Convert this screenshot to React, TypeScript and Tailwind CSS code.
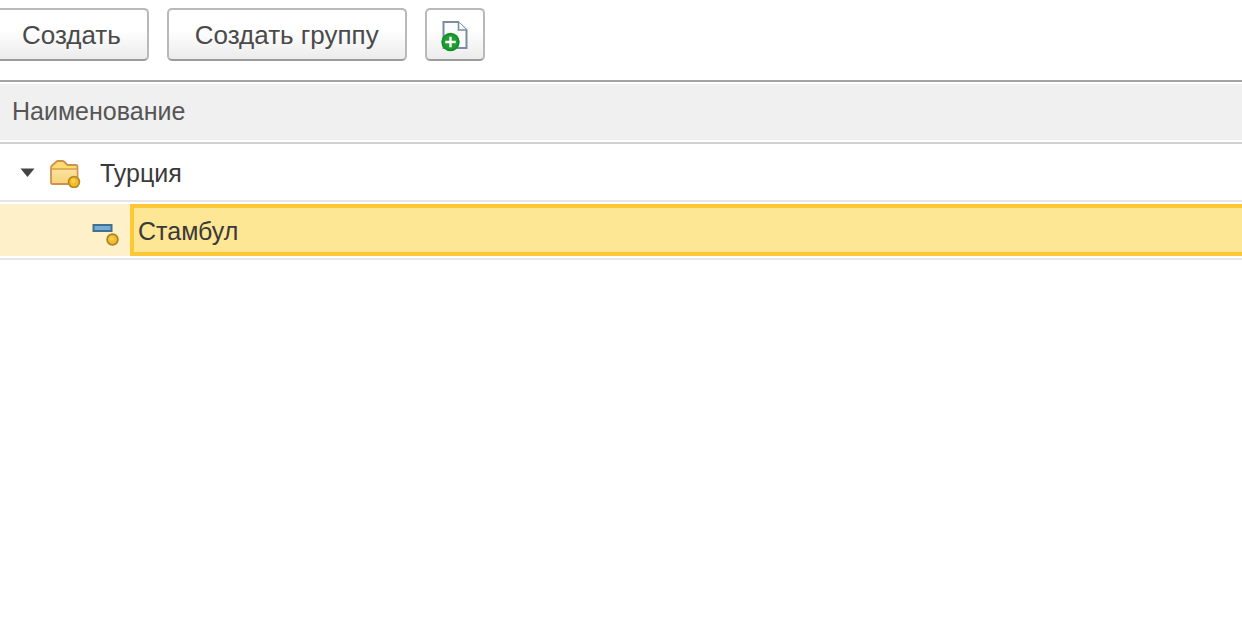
import type { ReactNode } from "react";

function DocumentAddIcon() {
  return (
    <svg width="32" height="34" viewBox="0 0 32 34" fill="none" aria-hidden="true">
      <path d="M4.5 4H19L27.5 12V30H4.5Z" fill="#fbfcfd" stroke="#7a8da0" strokeWidth="2" />
      <path d="M19.5 4V12H27.5" fill="#fff" stroke="#7a8da0" strokeWidth="1.6" />
      <circle cx="11.5" cy="24" r="9.2" fill="#1f9d33" />
      <circle cx="11.5" cy="24" r="8.2" stroke="#138a28" strokeWidth="1.2" />
      <path d="M11.5 18.8V29.2M6.3 24H16.7" stroke="#fff" strokeWidth="2.4" />
    </svg>
  );
}

function FolderIcon() {
  return (
    <svg width="32" height="30" viewBox="0 0 32 30" aria-hidden="true">
      <defs>
        <linearGradient id="folder" x1="0" y1="0" x2="0" y2="1">
          <stop offset="0" stopColor="#fae3a0" />
          <stop offset="1" stopColor="#f8d37c" />
        </linearGradient>
      </defs>
      <path d="M2 9.5Q2 8.5 3 7.5L7 4Q8 3 9 3H13.5Q14.5 3 15.5 4L18.5 7H27Q28.5 7 28.5 8.5V24.5Q28.5 26 27 26H3.5Q2 26 2 24.5Z" fill="#fbdc70" stroke="#cf9150" strokeWidth="1.8" strokeLinejoin="round" />
      <path d="M3 11.5H27.5V25H3Z" fill="url(#folder)" />
      <path d="M2 11H28.5" stroke="#dc9a4a" strokeWidth="1.4" />
      <circle cx="25" cy="24" r="5.4" fill="#f5bd2c" stroke="#b58a20" strokeWidth="1.7" />
      <circle cx="24.3" cy="23" r="2.2" fill="#fbd04c" />
    </svg>
  );
}

function ItemIcon() {
  return (
    <svg width="28" height="26" viewBox="0 0 28 26" aria-hidden="true">
      <rect x="1.5" y="4" width="18" height="6" fill="#74add8" stroke="#456f8e" strokeWidth="2" />
      <circle cx="20.5" cy="18.5" r="5.4" fill="#f5b92a" stroke="#a98528" strokeWidth="1.7" />
      <circle cx="19.8" cy="17.6" r="2.2" fill="#fbcf4c" />
    </svg>
  );
}

function ToolButton({ className, label, children }: { className: string; label?: string; children: ReactNode }) {
  return (
    <button
      type="button"
      aria-label={label}
      className={`flex h-[53px] items-center justify-center border-2 border-[#b9b9b9] border-b-[#9c9c9c] bg-linear-to-b from-white from-40% to-[#ececec] text-[26px] text-[#4a4a4a] ${className}`}
    >
      {children}
    </button>
  );
}

export default function App() {
  return (
    <main className="min-h-screen bg-white font-['Liberation_Sans',Arial,sans-serif] text-[25px] leading-8 text-[#3a3a3a]">
      <div className="flex gap-[18px] pt-2 pb-[19px]">
        <ToolButton className="rounded-r-[5px] border-l-0 pr-[26px] pl-[22px]">Создать</ToolButton>
        <ToolButton className="rounded-[5px] px-[26px]">Создать группу</ToolButton>
        <ToolButton className="w-[60px] rounded-[5px]" label="Создать копированием">
          <DocumentAddIcon />
        </ToolButton>
      </div>
      <table className="w-full border-collapse">
        <thead>
          <tr className="border-t-2 border-b-2 border-t-[#a3a3a3] border-b-[#d0d0d0]">
            <th className="py-0.5 text-left font-normal text-[#555]">
              <div className="bg-[#f0f0f0] px-3 pt-[11px] pb-[13px]">Наименование</div>
            </th>
          </tr>
        </thead>
        <tbody>
          <tr className="border-b-2 border-[#e6e6ea]">
            <td className="p-0">
              <div className="flex h-14 items-center pt-0.5 pl-5">
                <button type="button" aria-label="Свернуть" aria-expanded="true" className="mr-3.5">
                  <svg width="15" height="10" viewBox="0 0 15 10" aria-hidden="true">
                    <path d="M0.5 0.5H14.5L7.5 9Z" fill="#444" />
                  </svg>
                </button>
                <FolderIcon />
                <span className="ml-[19px]">Турция</span>
              </div>
            </td>
          </tr>
          <tr className="border-b-2 border-[#e6e6ea]" aria-selected="true">
            <td className="px-0 py-0.5">
              <div className="flex h-[52px] bg-[#fef0c8]">
                <div className="flex w-[130px] items-center justify-end pt-2 pr-2.5">
                  <ItemIcon />
                </div>
                <div className="flex flex-1 items-center border-4 border-r-0 border-[#fdc735] bg-[#fde694] pt-0.5 pl-1">
                  Стамбул
                </div>
              </div>
            </td>
          </tr>
        </tbody>
      </table>
    </main>
  );
}
